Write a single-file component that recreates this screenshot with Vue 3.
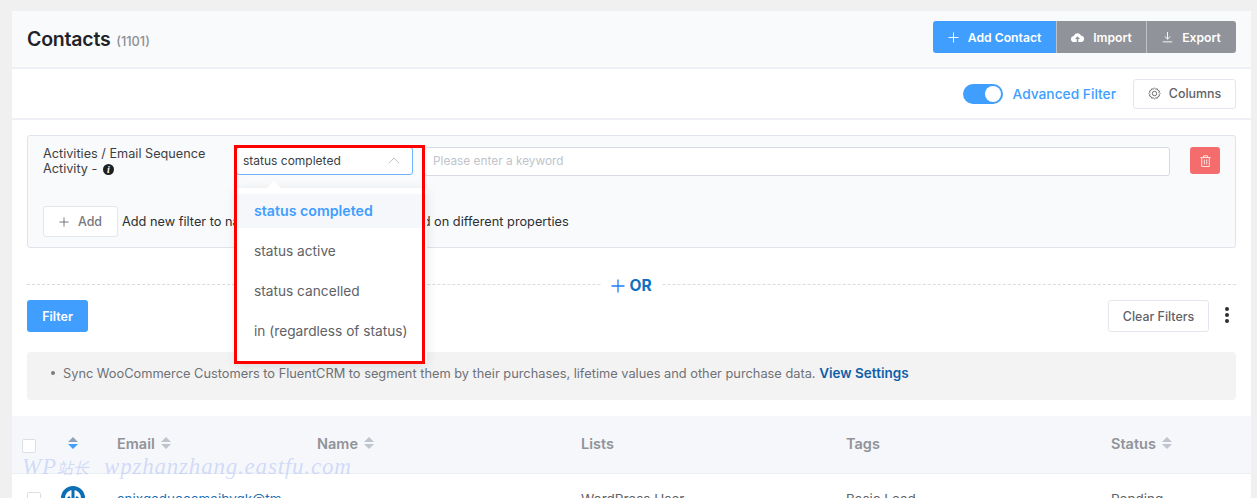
<template>
  <div class="page">
    <div class="panel">
      <!-- header -->
      <div class="head">
        <h1>Contacts <small>(1101)</small></h1>
        <div class="btn-group">
          <button class="act blue">
            <svg width="11" height="11" viewBox="0 0 12 12"><path d="M6 .5v11M.5 6h11" stroke="#fff" fill="none"/></svg>
            Add Contact
          </button>
          <button class="act grey">
            <svg width="13" height="11" viewBox="0 0 13 11"><path d="M3.2 10A3 3 0 0 1 2.8 4 3.9 3.9 0 0 1 10.200 3.800 3.100 3.100 0 0 1 9.800 10H7.300V7h1.700L6.500 4.200 4 7h1.700v3z" fill="#fff"/></svg>
            Import
          </button>
          <button class="act grey">
            <svg width="11" height="12" viewBox="0 0 12 12"><path d="M6 .5v7.500M3 5.500 6 8.300 9 5.500M.8 11.300h10.400" stroke="#fff" fill="none"/></svg>
            Export
          </button>
        </div>
      </div>

      <div class="toolbar">
        <span class="switch"><i></i></span>
        <span class="adv">Advanced Filter</span>
        <button class="plain columns">
          <svg width="13" height="13" viewBox="0 0 14 14"><path d="M7 1.200 8.300 2.300 10 2 10.700 3.600 12.300 4.300 12 6 13 7 12 8 12.300 9.700 10.700 10.400 10 12 8.300 11.700 7 12.800 5.700 11.700 4 12 3.300 10.400 1.700 9.700 2 8 1 7 2 6 1.700 4.300 3.300 3.600 4 2 5.700 2.300z" fill="none" stroke="#606266"/><circle cx="7" cy="7" r="2.400" fill="none" stroke="#606266"/></svg>
          Columns
        </button>
      </div>

      <div class="filters">
        <div class="filter-box">
          <div class="cond">
            <div class="cond-label">
              Activities / Email Sequence<br>Activity -
              <span class="info">i</span>
            </div>
            <div class="select">
              <span>status completed</span>
              <svg width="12" height="7" viewBox="0 0 12 7"><path d="M.8 6.300 6 1l5.200 5.300" stroke="#c0c4cc" fill="none"/></svg>
            </div>
            <div class="keyword">Please enter a keyword</div>
            <button class="del">
              <svg width="11" height="12" viewBox="0 0 11 12"><path d="M.5 2.500h10M3.500 2.500V.8h4v1.700M1.700 2.500v9h7.600v-9M4.300 4.500v5M6.700 4.500v5" stroke="#fde2e2" fill="none"/></svg>
            </button>
          </div>
          <div class="add-row">
            <button class="plain add">
              <svg width="10" height="10" viewBox="0 0 12 12"><path d="M6 .5v11M.5 6h11" stroke="#606266" fill="none"/></svg>
              Add
            </button>
            <span>Add new filter to narrow down your contacts based on different properties</span>
          </div>
        </div>

        <div class="or-line">
          <span class="or">
            <svg width="14" height="14" viewBox="0 0 14 14"><path d="M7 .5v13M.5 7h13" stroke="#1a7efb" stroke-width="1.300" fill="none"/></svg>
            OR
          </span>
        </div>

        <div class="actions">
          <button class="filter-btn">Filter</button>
          <div class="actions-right">
            <button class="plain clear">Clear Filters</button>
            <span class="dots"><i></i><i></i><i></i></span>
          </div>
        </div>

        <div class="notice">
          <span class="bullet"></span>
          Sync WooCommerce Customers to FluentCRM to segment them by their purchases, lifetime values and other purchase data.
          <a>View Settings</a>
        </div>
      </div>

      <!-- table -->
      <div class="thead">
        <span class="check"></span>
        <span class="sort-only"><span class="sort active"><b></b><em></em></span></span>
        <span v-for="c in columns" :key="c.name" class="th">
          {{ c.name }}
          <span v-if="c.sort" class="sort"><b></b><em></em></span>
        </span>
      </div>
      <div class="trow">
        <span class="check"></span>
        <span class="avatar">
          <svg width="24" height="24" viewBox="0 0 24 24"><circle cx="12" cy="12" r="10" fill="none" stroke="#0a6fb5" stroke-width="4"/><path d="M12 4v13M7 11l5 6 5-6" stroke="#0a6fb5" stroke-width="3" fill="none"/></svg>
        </span>
        <a class="mail">anjxgaduocamaibvgk@tm</a>
        <span></span>
        <span>WordPress User</span>
        <span>Basic Lead</span>
        <span>Pending</span>
      </div>
    </div>

    <!-- dropdown that opens over the filter box -->
    <div class="dropdown">
      <span class="arrow"></span>
      <div v-for="(o, i) in options" :key="o" class="opt" :class="{ on: i === 0 }">{{ o }}</div>
    </div>
    <div class="redbox"></div>
    <div class="watermark"><span class="wm-cn">WP<i>站长</i></span>wpzhanzhang.eastfu.com</div>
  </div>
</template>

<script setup>
const options = ['status completed', 'status active', 'status cancelled', 'in (regardless of status)']
const columns = [
  { name: 'Email', sort: true },
  { name: 'Name', sort: true },
  { name: 'Lists', sort: false },
  { name: 'Tags', sort: false },
  { name: 'Status', sort: true }
]
</script>

<style>
html, body { margin: 0; background: #f0f0f1; }
</style>

<style scoped>
.page {
  position: relative;
  height: 498px;
  overflow: hidden;
  box-sizing: border-box;
  padding: 11px 6px 0 12px;
  background: #f0f0f1;
  font-family: Inter, "Liberation Sans", sans-serif;
  font-size: 14px;
  color: #303133;
}
.panel { background: #fff; height: 100%; }
button { font-family: inherit; cursor: pointer; }

.head {
  height: 56px;
  background: #f9fafb;
  border-bottom: 2px solid #eef0f5;
  display: flex;
  align-items: center;
  justify-content: space-between;
  padding: 0 15px;
}
h1 { margin: 0; font-size: 19.500px; font-weight: 600; color: #1f2329; letter-spacing: -0.2px; }
h1 small { font-size: 12.800px; font-weight: 500; color: #8d9094; letter-spacing: 0; margin-left: 1px; }
.btn-group { display: flex; margin-top: -4px; }
.act {
  height: 32px;
  border: 0;
  color: #fff;
  font-size: 12.200px;
  font-weight: 600;
  display: flex;
  align-items: center;
  justify-content: center;
  gap: 9px;
  padding: 0;
}
.act.blue { width: 123px; background: #409eff; border-radius: 3px 0 0 3px; }
.act.grey { width: 90px; background: #909399; border-left: 1px solid #c0c2c6; }
.act.grey:last-child { border-radius: 0 3px 3px 0; }

.toolbar {
  height: 49px;
  border-bottom: 2px solid #eef0f5;
  display: flex;
  align-items: center;
  justify-content: flex-end;
  padding: 0 15px;
}
.switch {
  width: 40px;
  height: 20px;
  border-radius: 10px;
  background: #409eff;
  display: flex;
  align-items: center;
  justify-content: flex-end;
  padding-right: 2px;
  box-sizing: border-box;
}
.switch i { width: 16px; height: 16px; border-radius: 50%; background: #fff; }
.adv { margin: 0 17px 0 10px; color: #409eff; font-size: 13.750px; font-weight: 500; }
.plain {
  background: #fff;
  border: 1px solid #e3e6ec;
  border-radius: 3px;
  color: #606266;
  font-size: 12.400px;
  font-weight: 500;
  display: flex;
  align-items: center;
  justify-content: center;
  padding: 0;
}
.columns { width: 103px; height: 30px; gap: 8px; }

.filters { padding: 15px 15px 0; }
.filter-box {
  height: 113px;
  box-sizing: border-box;
  border: 1px solid #dfe3ea;
  border-radius: 3px;
  background: #f9fafb;
  padding: 11px 15px 0;
}
.cond { display: flex; align-items: flex-start; }
.cond-label { width: 193px; font-size: 12.700px; line-height: 15px; margin-top: -1px; color: #3c3f44; }
.info {
  display: inline-block;
  width: 11px;
  height: 11px;
  margin-left: 2px;
  border-radius: 50%;
  background: #1d1f22;
  color: #fff;
  font: italic 700 10px/11px "Liberation Serif", serif;
  text-align: center;
}
.select {
  width: 177px;
  height: 28px;
  box-sizing: border-box;
  border: 1.500px solid #6fb4fb;
  border-radius: 3px;
  background: #fff;
  margin-right: 11px;
  padding: 0 12px 1px 6px;
  font-size: 12px;
  display: flex;
  align-items: center;
  justify-content: space-between;
  color: #3c3f44;
}
.keyword {
  width: 746px;
  height: 29px;
  line-height: 26px;
  box-sizing: border-box;
  border: 1.500px solid #d7dae2;
  border-radius: 3px;
  background: #fff;
  padding-left: 8px;
  font-size: 11.850px;
  color: #c0c4cc;
  margin-right: 20px;
}
.del {
  width: 30px;
  height: 27px;
  border: 0;
  border-radius: 3px;
  background: #f56c6c;
  display: flex;
  align-items: center;
  justify-content: center;
  padding: 0;
}
.add-row { display: flex; align-items: center; margin-top: 30px; font-size: 12.750px; color: #2c2f33; }
.add { width: 75px; height: 31px; gap: 9px; margin-right: 4px; color: #77797e; }

.or-line {
  height: 1px;
  margin-top: 36px;
  border-top: 1px dashed #d5dde5;
  display: flex;
  justify-content: center;
  align-items: center;
}
.or {
  background: #fff;
  padding: 0 10px;
  display: flex;
  align-items: center;
  gap: 4px;
  color: #0f6fc0;
  font-size: 15.500px;
  font-weight: 700;
}
.actions {
  margin-top: 14px;
  display: flex;
  justify-content: space-between;
  align-items: center;
}
.actions-right { display: flex; align-items: center; }
.filter-btn {
  width: 61px;
  height: 32px;
  border: 0;
  border-radius: 3px;
  background: #409eff;
  color: #fff;
  font-size: 12.500px;
  font-weight: 600;
}
.clear { width: 101px; height: 32px; }
.dots { width: 27px; display: flex; flex-direction: column; align-items: flex-end; gap: 2px; padding-right: 7px; box-sizing: border-box; margin-top: -3px; }
.dots i { width: 4px; height: 4px; border-radius: 50%; background: #2d2f33; }

.notice {
  position: relative;
  margin-top: 20px;
  height: 48px;
  box-sizing: border-box;
  padding: 13px 0 0 36px;
  border-radius: 4px;
  background: #f3f3f4;
  color: #6f7175;
  font-size: 12.800px;
  line-height: 17px;
}
.bullet { position: absolute; left: 24px; top: 19px; width: 4px; height: 4px; border-radius: 50%; background: #7a7c80; }
.notice a { color: #0f5fa8; font-weight: 600; font-size: 13.500px; }

.thead, .trow {
  display: grid;
  grid-template-columns: 47px 48px 200px 264px 265px 265px 1fr;
  padding-left: 10px;
  align-items: center;
}
.thead {
  margin-top: 16px;
  height: 58px;
  box-sizing: border-box;
  background: #f5f7fa;
  border-bottom: 1px solid #ebeef5;
  padding-bottom: 3px;
}
.thead .check { margin-top: 5px; }
.th {
  color: #909399;
  font-size: 14.500px;
  font-weight: 600;
  display: flex;
  align-items: center;
  gap: 6px;
}
.check {
  width: 14px;
  height: 14px;
  box-sizing: border-box;
  border: 1px solid #dcdfe6;
  border-radius: 2px;
  background: #fff;
}
.sort-only { display: flex; margin-left: -1px; }
.sort { display: inline-flex; flex-direction: column; gap: 2px; }
.sort b, .sort em { width: 0; height: 0; border-left: 5px solid transparent; border-right: 5px solid transparent; }
.sort b { border-bottom: 5px solid #c0c4cc; }
.sort em { border-top: 5px solid #c0c4cc; }
.sort.active b { border-bottom-color: #8fa3b8; }
.sort.active em { border-top-color: #409eff; }

.trow { padding-top: 12px; font-size: 13.500px; color: #606266; align-items: start; }
.trow .check { margin-left: 5px; margin-top: 6px; }
.trow > span { white-space: nowrap; }
.trow > span:nth-last-child(-n+3) { padding-top: 5px; }
.avatar { margin-left: -8px; }
.mail { color: #1f6fb5; padding-top: 5px; }

.dropdown {
  position: absolute;
  left: 236px;
  top: 188px;
  width: 191px;
  height: 176px;
  box-sizing: border-box;
  padding-top: 6px;
  background: #fff;
  box-shadow: 0 2px 12px rgba(0, 0, 0, 0.1);
  border-radius: 3px;
}
.arrow {
  position: absolute;
  left: 33px;
  top: -5px;
  width: 10px;
  height: 10px;
  background: #fff;
  transform: rotate(45deg);
}
.opt {
  height: 34px;
  line-height: 34px;
  margin-bottom: 6px;
  padding-left: 18px;
  font-size: 13.700px;
  color: #606266;
  white-space: nowrap;
  position: relative;
}
.opt.on { color: #409eff; font-size: 14.200px; font-weight: 600; background: #f5f7fa; }
.redbox {
  position: absolute;
  left: 234px;
  top: 145px;
  width: 191px;
  height: 219px;
  box-sizing: border-box;
  border: 3px solid #f00;
  pointer-events: none;
}
.watermark {
  position: absolute;
  left: 22px;
  top: 454px;
  font: italic 400 23px "Liberation Serif", "Noto Sans CJK SC", serif;
  color: rgba(120, 150, 245, 0.3);
  letter-spacing: 0.8px;
  white-space: nowrap;
}
.wm-cn { display: inline-block; width: 82px; }
.wm-cn i { font-size: 16px; letter-spacing: 0; }
</style>
